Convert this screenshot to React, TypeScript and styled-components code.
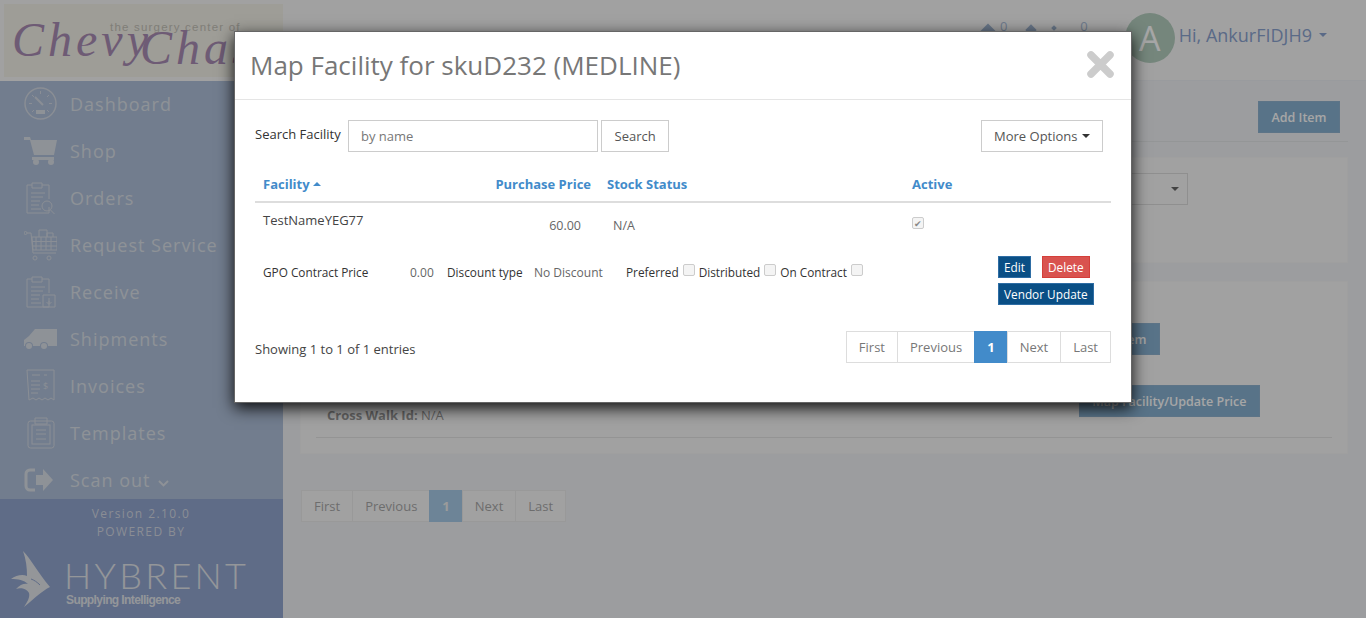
import styled, { createGlobalStyle } from 'styled-components';

const GlobalStyle = createGlobalStyle`
  html, body { margin: 0; padding: 0; height: 618px; overflow: hidden; }
  body { font-family: 'Open Sans', sans-serif; font-size: 13px; color: #333; background: #f0f1f4; }
  * { box-sizing: border-box; }
`;

const Page = styled.div`
  position: relative;
  display: flex;
  width: 1366px;
  height: 618px;
  overflow: hidden;
`;

const Sidebar = styled.aside`
  width: 283px;
  flex-shrink: 0;
  display: flex;
  flex-direction: column;
  background: #b0c1da;
`;

const LogoBar = styled.div`
  height: 81px;
  padding: 4px 0 4px 4px;
  background: #f8f8f8;
`;

const LogoPlate = styled.div`
  position: relative;
  height: 73px;
  background: #f3f1e9;
  overflow: hidden;
`;

const LogoScript = styled.span<{ $left: number; $top: number }>`
  position: absolute;
  left: ${p => p.$left}px;
  top: ${p => p.$top}px;
  font-family: 'Liberation Serif', serif;
  font-style: italic;
  font-size: 48px;
  line-height: 48px;
  letter-spacing: 4px;
  white-space: nowrap;
  color: #a98db4;
`;

const LogoTagline = styled.span`
  position: absolute;
  left: 106px;
  top: 17px;
  font-family: 'Liberation Sans', sans-serif;
  font-size: 11.5px;
  letter-spacing: 1.2px;
  white-space: nowrap;
  color: #c4c2b8;
`;

const Menu = styled.nav`
  height: 418px;
  margin-top: -1px;
  overflow: hidden;
`;

const NavItem = styled.div`
  height: 47px;
  display: flex;
  align-items: center;
  gap: 13px;
  padding-left: 24px;
  font-size: 18px;
  letter-spacing: 1px;
  white-space: nowrap;
  color: #dbe0e8;
  svg { flex-shrink: 0; }
`;

const Chevron = styled.span`
  margin-left: 7px;
  display: inline-flex;
`;

const SideFooter = styled.div`
  flex: 1;
  margin-top: 1px;
  background: #92a6d0;
  padding-top: 6px;
  color: #d4d9e4;
  font-size: 12px;
  letter-spacing: 1.4px;
  line-height: 18px;
`;

const FooterLine = styled.div`
  padding-right: 1px;
  text-align: center;
`;

const Brand = styled.div`
  display: flex;
  align-items: flex-start;
  gap: 16px;
  margin-top: 10px;
  padding-left: 11px;
`;

const BrandText = styled.div`
  display: flex;
  flex-direction: column;
  padding-top: 6px;
`;

const BrandName = styled.span`
  margin-left: -2px;
  font-family: Lato, sans-serif;
  font-weight: 300;
  font-size: 36px;
  letter-spacing: 3.3px;
  line-height: 36px;
  color: #e3e6ec;
`;

const BrandTag = styled.span`
  font-family: 'Liberation Sans', sans-serif;
  font-size: 12px;
  font-weight: 700;
  letter-spacing: -0.6px;
  line-height: 14px;
  color: #e3e6ec;
`;

const Main = styled.main`
  flex: 1;
  min-width: 0;
  display: flex;
  flex-direction: column;
`;

const TopBar = styled.header`
  height: 81px;
  flex-shrink: 0;
  display: flex;
  align-items: flex-start;
  justify-content: flex-end;
  padding: 13px 39px 0 0;
  background: #f8f8f8;
  border-bottom: 1px solid #eceff3;
`;

const Stats = styled.div`
  display: flex;
  align-items: flex-start;
  margin: 6px 37px 0 0;
  font-size: 13px;
  line-height: 14px;
  color: #a9bdd8;
`;

const StatMark = styled.span<{ $w: number; $gap: number }>`
  width: ${p => p.$w}px;
  height: ${p => p.$w}px;
  margin: 7px ${p => p.$gap}px 0 0;
  background: #9fb4d0;
  transform: rotate(45deg);
`;

const Avatar = styled.div`
  width: 50px;
  height: 50px;
  border-radius: 50%;
  display: flex;
  align-items: center;
  justify-content: center;
  background: #b4cebf;
  color: #fff;
  font-size: 34px;
`;

const UserName = styled.div`
  margin: 10px 0 0 4px;
  display: flex;
  align-items: center;
  gap: 7px;
  font-size: 18px;
  color: #8ba3d0;
`;

const Caret = styled.span<{ $up?: boolean; $color?: string }>`
  display: inline-block;
  width: 0;
  height: 0;
  border-left: 4px solid transparent;
  border-right: 4px solid transparent;
  ${p => (p.$up ? 'border-bottom' : 'border-top')}: 4px solid ${p => p.$color ?? 'currentColor'};
`;

const Content = styled.div`
  flex: 1;
  display: flex;
  flex-direction: column;
  padding: 20px 18px 0 17px;
`;

const TitleRow = styled.div`
  display: flex;
  justify-content: flex-end;
  padding: 0 8px 8px 0;
  border-bottom: 1px solid #e4e6e9;
`;

const Button = styled.button`
  height: 32px;
  padding: 0 12.5px;
  border: 1px solid #90b3d0;
  border-radius: 0;
  background: #88b1d1;
  color: #fff;
  font-family: inherit;
  font-size: 12.5px;
  font-weight: 600;
  white-space: nowrap;
`;

const Card = styled.section<{ $height: number; $top: number }>`
  height: ${p => p.$height}px;
  margin-top: ${p => p.$top}px;
  padding: 15px;
  background: #f8f8f8;
  border: 1px solid #f5f5f5;
`;

const SelectBox = styled.div`
  width: 120px;
  height: 32px;
  margin-left: 752px;
  padding-right: 8px;
  display: flex;
  align-items: center;
  justify-content: flex-end;
  border: 1px solid #dcdcdc;
  color: #666;
`;

const ItemRow = styled.div<{ $top: number; $right: number }>`
  display: flex;
  justify-content: flex-end;
  padding: ${p => p.$top}px ${p => p.$right}px 0 0;
`;

const CrossWalk = styled.div`
  margin: -11px 0 0 11px;
  font-size: 13px;
  font-weight: 700;
  line-height: 18px;
  color: #999;
  span { font-weight: 400; }
`;

const CardRule = styled.hr`
  margin: 13px 0 0;
  border: 0;
  border-top: 1px solid #e4e4e4;
`;

const Pager = styled.div`
  display: flex;
  height: 32px;
`;

const PageCell = styled.span<{ $active?: boolean }>`
  display: flex;
  align-items: center;
  padding: 0 12px;
  margin-left: -1px;
  border: 1px solid ${p => (p.$active ? '#428bca' : '#ddd')};
  background: ${p => (p.$active ? '#428bca' : '#fff')};
  color: ${p => (p.$active ? '#fff' : '#777')};
  font-weight: ${p => (p.$active ? 700 : 400)};
  font-size: 13px;
  &:first-child { margin-left: 0; }
`;

const BottomPager = styled.div`
  margin: 36px 0 0 1px;
  ${PageCell} { background: #f8f8f8; border-color: #ececec; color: #a8a8a8; }
  ${PageCell}:nth-child(3) { background: #a8cbe8; border-color: #a8cbe8; color: #eee; }
`;

const Overlay = styled.div`
  position: absolute;
  inset: 0;
  background: rgba(0, 0, 0, 0.35);
`;

const Modal = styled.div`
  width: 898px;
  height: 372px;
  margin: 31px auto 0;
  background: #fff;
  border: 1px solid #666;
  box-shadow: 0 5px 15px rgba(0, 0, 0, 0.9);
`;

const ModalHeader = styled.div`
  height: 68px;
  display: flex;
  align-items: center;
  justify-content: space-between;
  padding: 0 17px 2px 15px;
  border-bottom: 1px solid #e5e5e5;
`;

const ModalTitle = styled.h4`
  margin: 0;
  font-size: 26px;
  font-weight: 400;
  color: #777;
`;

const ModalBody = styled.div`
  padding: 20px 20px 0;
`;

const SearchRow = styled.div`
  display: flex;
  align-items: center;
  height: 32px;
`;

const SearchLabel = styled.label`
  width: 93px;
  padding-bottom: 4px;
  font-size: 13px;
  font-weight: 500;
  white-space: nowrap;
  color: #333;
`;

const SearchInput = styled.input`
  width: 250px;
  height: 32px;
  padding: 0 12px;
  border: 1px solid #ccc;
  border-radius: 0;
  outline: 0;
  font-family: inherit;
  font-size: 13px;
  color: #555;
  &::placeholder { color: #777; }
`;

const PlainButton = styled.button`
  height: 32px;
  padding: 0 12.5px;
  margin-left: 3px;
  display: flex;
  align-items: center;
  gap: 4px;
  border: 1px solid #ccc;
  border-radius: 0;
  background: #fff;
  color: #555;
  font-family: inherit;
  font-size: 13px;
`;

const MoreOptions = styled(PlainButton)`
  margin-left: auto;
  margin-right: 8px;
`;

const HeadRow = styled.div`
  display: grid;
  grid-template-columns: 328px 321px 1fr;
  height: 35px;
  margin-top: 16px;
  padding: 7px 8px 0;
  border-bottom: 2px solid #ddd;
  font-size: 13px;
  font-weight: 700;
  color: #428bca;
`;

const HeadCell = styled.div<{ $indent?: number }>`
  display: flex;
  align-items: flex-start;
  gap: 3px;
  padding-left: ${p => p.$indent ?? 0}px;
  ${Caret} { margin-top: 7px; }
`;

const PurchaseLabel = styled.span`
  margin-left: auto;
`;

const DataRow = styled.div`
  display: grid;
  grid-template-columns: 328px 321px 1fr;
  height: 53px;
  padding: 8px 8px 0;
  font-size: 12.5px;
  color: #555;
`;

const RowSplit = styled.div`
  display: flex;
  justify-content: space-between;
`;

const FacilityName = styled.div`
  font-size: 13px;
  color: #444;
`;

const PriceCell = styled.div`
  padding: 6px 10px 0 0;
  text-align: right;
  color: #666;
`;

const StatusCell = styled.div`
  padding: 6px 0 0 22px;
  color: #666;
`;

const ActiveCell = styled.div`
  display: flex;
  align-items: flex-start;
  padding-top: 6px;
`;

const DetailRow = styled.div`
  display: grid;
  grid-template-columns: 147px 37px 87px 92px 372px 1fr;
  height: 62px;
  padding: 0 8px;
  font-size: 11.8px;
`;

const DetailLabel = styled.div`
  padding-top: 8px;
  font-weight: 500;
  color: #333;
  white-space: nowrap;
`;

const DetailValue = styled.div`
  padding-top: 8px;
  font-size: 12px;
  color: #666;
  white-space: nowrap;
`;

const FlagGroup = styled.div`
  display: flex;
  align-items: flex-start;
  gap: 4px;
  padding-top: 8px;
  font-weight: 500;
  color: #333;
  white-space: nowrap;
`;

const CheckBox = styled.span<{ $checked?: boolean }>`
  display: inline-flex;
  align-items: center;
  justify-content: center;
  width: 12px;
  height: 12px;
  border: 1px solid #ccc;
  border-radius: 2px;
  background: #f4f4f4;
  font-size: 9px;
  line-height: 1;
  color: #888;
  &::after { content: '${p => (p.$checked ? '✔' : '')}'; }
`;

const ActionGroup = styled.div`
  display: flex;
  flex-wrap: wrap;
  align-content: flex-start;
  gap: 5px 11px;
  width: 110px;
`;

const SmallButton = styled.button<{ $danger?: boolean }>`
  height: 22px;
  padding: 0 5px;
  border: 1px solid ${p => (p.$danger ? '#d43f3a' : '#2e6da4')};
  border-radius: 0;
  background: ${p => (p.$danger ? '#d9534f' : '#0a4f85')};
  color: #fff;
  font-family: inherit;
  font-size: 11.8px;
  font-weight: 500;
  white-space: nowrap;
`;

const TableFooter = styled.div`
  display: flex;
  align-items: center;
  justify-content: space-between;
  margin-top: 13px;
  font-size: 13px;
  color: #444;
`;

const FooterNote = styled.span`
  padding-top: 4px;
`;

const stroke = { fill: 'none', stroke: '#d5dbe5', strokeWidth: 1 };
const solid = { fill: '#dbe0e8' };

const GaugeIcon = () => (
  <svg width="33" height="33" viewBox="0 0 33 33">
    <circle cx="16.5" cy="16.5" r="15.5" {...stroke} strokeWidth={1.4} />
    <path d="M16.5 4v3M5 16.5h3M25 16.5h3M8 8l2 2M25 8l-2 2M8 25l2-2M25 25l-2-2" {...stroke} />
    <path d="M11 10l8 8" {...stroke} strokeWidth={1.8} />
    <path d="M12 23h9v4h-9z" {...solid} />
  </svg>
);

const CartIcon = () => (
  <svg width="33" height="33" viewBox="0 0 33 33">
    <path d="M0 3h6l1 3h26l-3 15H10L6 6H0z" {...solid} />
    <path d="M8 23h22v3H8z" {...solid} />
    <circle cx="12" cy="28" r="3" {...solid} />
    <circle cx="27" cy="28" r="3" {...solid} />
  </svg>
);

const ClipboardBase = () => (
  <>
    <path d="M8 4H3v28h22v-6M18 4h7v14" {...stroke} />
    <path d="M8 2h10v5H8z" {...stroke} />
    <path d="M7 12h14M7 16h12M7 20h9M7 24h8M7 28h10" {...stroke} />
  </>
);

const OrdersIcon = () => (
  <svg width="33" height="33" viewBox="0 0 33 33">
    <ClipboardBase />
    <circle cx="23" cy="25" r="5" {...stroke} />
    <path d="M26.500 29l4 4" {...stroke} />
  </svg>
);

const ReceiveIcon = () => (
  <svg width="33" height="33" viewBox="0 0 33 33">
    <ClipboardBase />
    <path d="M19 20h12v12H19zM25 23v6M22.500 27l2.500 2.500 2.500-2.500" {...stroke} />
  </svg>
);

const ServiceIcon = () => (
  <svg width="33" height="33" viewBox="0 0 33 33">
    <circle cx="1.500" cy="5" r="1.500" {...stroke} />
    <path d="M3 5h4l2 20h23" {...stroke} />
    <path d="M8 9h25v13H9zM12 9v13M17 9v13M22 9v13M27 9v13M8 13.500h25M8 18h25" {...stroke} />
    <path d="M15 9V2h8v7M23 9V5h6v4" {...stroke} />
    <circle cx="11" cy="30" r="2" {...stroke} />
    <circle cx="25" cy="30" r="2" {...stroke} />
  </svg>
);

const TruckIcon = () => (
  <svg width="33" height="33" viewBox="0 0 33 33">
    <path d="M11 7h22v17H24a4 4 0 0 0-8 0H9a4 4 0 0 0-8 0H0v-6l5-4z" {...solid} />
    <circle cx="5" cy="24" r="3" {...solid} />
    <circle cx="20" cy="24" r="3" {...solid} />
  </svg>
);

const InvoiceIcon = () => (
  <svg width="33" height="33" viewBox="0 0 33 33">
    <path d="M3 1h27v30l-3-2-3 2-3-2-3 2-3-2-3 2-3-2-4 2z" {...stroke} />
    <path d="M8 6h8M20 6h3M7 12h9M7 16h9M7 20h9M7 24h7" {...stroke} />
    <text x="19" y="20" fontFamily="'Open Sans', sans-serif" fontSize="9" fill="#d5dbe5">$</text>
  </svg>
);

const TemplateIcon = () => (
  <svg width="33" height="33" viewBox="0 0 33 33">
    <rect x="4" y="5" width="26" height="27" rx="2.500" {...stroke} />
    <path d="M11 5V2h12v3M11 5v3h12V5" {...stroke} />
    <rect x="8" y="9" width="18" height="19" {...stroke} />
    <path d="M12 14h10M12 18h10M12 23h10" {...stroke} />
  </svg>
);

const ScanOutIcon = () => (
  <svg width="33" height="33" viewBox="0 0 33 33">
    <path d="M11 7H6a4 4 0 0 0-4 4v12a4 4 0 0 0 4 4h5" fill="none" stroke="#dbe0e8" strokeWidth="3" />
    <path d="M12 12h7V6l10 11-10 11v-6h-7z" {...solid} />
  </svg>
);

const ChevronIcon = () => (
  <svg width="11" height="7" viewBox="0 0 11 7">
    <path d="M1 1l4.500 4.500L10 1" fill="none" stroke="#dbe0e8" strokeWidth="1.800" />
  </svg>
);

const BirdLogo = () => (
  <svg width="39" height="57" viewBox="0 0 39 57">
    <path d="M12 0c8 8 15 22 27 36-8 4-14 10-26 20 4-6 6-10 5-14-2-4-8-6-13-4 4-5 9-6 12-5-4-4-10-5-17-5 5-4 12-5 16-3 0-8-1-17-4-25z" fill="#e3e6ec" />
    <path d="M20 28c3 1 6 3 9 6" fill="none" stroke="#92a6d0" strokeWidth="1" />
  </svg>
);

const CloseIcon = () => (
  <svg width="27" height="27" viewBox="0 0 27 27">
    <path d="M4 4l19 19M23 4L4 23" fill="none" stroke="#ccc" strokeWidth="7.500" strokeLinecap="round" />
  </svg>
);

const navItems = [
  { label: 'Dashboard', icon: <GaugeIcon /> },
  { label: 'Shop', icon: <CartIcon /> },
  { label: 'Orders', icon: <OrdersIcon /> },
  { label: 'Request Service', icon: <ServiceIcon /> },
  { label: 'Receive', icon: <ReceiveIcon /> },
  { label: 'Shipments', icon: <TruckIcon /> },
  { label: 'Invoices', icon: <InvoiceIcon /> },
  { label: 'Templates', icon: <TemplateIcon /> },
];

const pages = ['First', 'Previous', '1', 'Next', 'Last'];

const Pagination = () => (
  <Pager>
    {pages.map(p => (
      <PageCell key={p} $active={p === '1'}>{p}</PageCell>
    ))}
  </Pager>
);

export default function App() {
  return (
    <Page>
      <GlobalStyle />
      <Sidebar>
        <LogoBar>
          <LogoPlate>
            <LogoTagline>the surgery center of</LogoTagline>
            <LogoScript $left={8} $top={12}>Chevy</LogoScript>
            <LogoScript $left={136} $top={20}>Chase</LogoScript>
          </LogoPlate>
        </LogoBar>
        <Menu>
          {navItems.map(item => (
            <NavItem key={item.label}>
              {item.icon}
              {item.label}
            </NavItem>
          ))}
          <NavItem>
            <ScanOutIcon />
            <span>
              Scan out
              <Chevron><ChevronIcon /></Chevron>
            </span>
          </NavItem>
        </Menu>
        <SideFooter>
          <FooterLine>Version 2.10.0</FooterLine>
          <FooterLine>POWERED BY</FooterLine>
          <Brand>
            <BirdLogo />
            <BrandText>
              <BrandName>HYBRENT</BrandName>
              <BrandTag>Supplying Intelligence</BrandTag>
            </BrandText>
          </Brand>
        </SideFooter>
      </Sidebar>
      <Main>
        <TopBar>
          <Stats>
            <StatMark $w={12} $gap={6} />
            <span>0</span>
            <StatMark $w={8} $gap={0} style={{ marginLeft: 20 }} />
            <StatMark $w={4} $gap={24} style={{ marginLeft: 17 }} />
            <span>0</span>
          </Stats>
          <Avatar>A</Avatar>
          <UserName>
            Hi, AnkurFIDJH9
            <Caret />
          </UserName>
        </TopBar>
        <Content>
          <TitleRow>
            <Button>Add Item</Button>
          </TitleRow>
          <Card $height={106} $top={15}>
            <SelectBox>
              <Caret />
            </SelectBox>
          </Card>
          <Card $height={173} $top={18}>
            <ItemRow $top={26} $right={172}>
              <Button>Edit Item</Button>
            </ItemRow>
            <ItemRow $top={30} $right={72}>
              <Button>Map Facility/Update Price</Button>
            </ItemRow>
            <CrossWalk>
              Cross Walk Id: <span>N/A</span>
            </CrossWalk>
            <CardRule />
          </Card>
          <BottomPager>
            <Pagination />
          </BottomPager>
        </Content>
      </Main>
      <Overlay>
        <Modal>
          <ModalHeader>
            <ModalTitle>Map Facility for skuD232 (MEDLINE)</ModalTitle>
            <CloseIcon />
          </ModalHeader>
          <ModalBody>
            <SearchRow>
              <SearchLabel>Search Facility</SearchLabel>
              <SearchInput placeholder="by name" readOnly />
              <PlainButton>Search</PlainButton>
              <MoreOptions>
                More Options <Caret $color="#333" />
              </MoreOptions>
            </SearchRow>
            <HeadRow>
              <HeadCell>
                <span>Facility</span>
                <Caret $up />
                <PurchaseLabel>Purchase Price</PurchaseLabel>
              </HeadCell>
              <HeadCell $indent={16}>Stock Status</HeadCell>
              <HeadCell>Active</HeadCell>
            </HeadRow>
            <DataRow>
              <RowSplit>
                <FacilityName>TestNameYEG77</FacilityName>
                <PriceCell>60.00</PriceCell>
              </RowSplit>
              <StatusCell>N/A</StatusCell>
              <ActiveCell>
                <CheckBox $checked />
              </ActiveCell>
            </DataRow>
            <DetailRow>
              <DetailLabel>GPO Contract Price</DetailLabel>
              <DetailValue>0.00</DetailValue>
              <DetailLabel>Discount type</DetailLabel>
              <DetailValue>No Discount</DetailValue>
              <FlagGroup>
                Preferred <CheckBox /> Distributed <CheckBox /> On Contract <CheckBox />
              </FlagGroup>
              <ActionGroup>
                <SmallButton>Edit</SmallButton>
                <SmallButton $danger>Delete</SmallButton>
                <SmallButton>Vendor Update</SmallButton>
              </ActionGroup>
            </DetailRow>
            <TableFooter>
              <FooterNote>Showing 1 to 1 of 1 entries</FooterNote>
              <Pagination />
            </TableFooter>
          </ModalBody>
        </Modal>
      </Overlay>
    </Page>
  );
}
